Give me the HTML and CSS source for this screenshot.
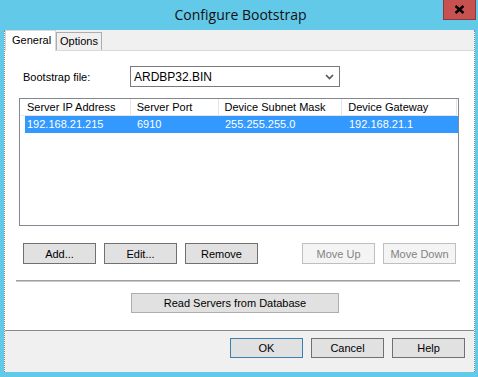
FILE: index.html
```html
<!DOCTYPE html>
<html lang="en">
<head>
    <meta charset="UTF-8">
    <title>Configure Bootstrap</title>
    <link rel="stylesheet" href="styles.css">
</head>
<body>
    <div class="window">
        <div class="titlebar">
            <span class="title">Configure Bootstrap</span>
            <div class="close-btn">
                <svg width="11" height="9" viewBox="0 0 11 9">
                    <path d="M1.5 1 L9.5 8 M9.5 1 L1.5 8" stroke="#000" stroke-width="2.4"/>
                </svg>
            </div>
        </div>

        <div class="client">
            <div class="tab-strip">
                <div class="tab active">General</div>
                <div class="tab">Options</div>
            </div>

            <!-- General tab -->
            <div class="panel">
                <div class="file-row">
                    <label class="file-label">Bootstrap file:</label>
                    <div class="select">
                        <span>ARDBP32.BIN</span>
                        <svg class="chevron" width="9" height="6" viewBox="0 0 9 6">
                            <path d="M1 1 L4.5 4.5 L8 1" fill="none" stroke="#555" stroke-width="1.6"/>
                        </svg>
                    </div>
                </div>

                <div class="listview">
                    <div class="lv-row lv-header">
                        <div class="col c1">Server IP Address</div>
                        <div class="col c2">Server Port</div>
                        <div class="col c3">Device Subnet Mask</div>
                        <div class="col c4">Device Gateway</div>
                    </div>
                    <div class="lv-row selected">
                        <div class="col c1">192.168.21.215</div>
                        <div class="col c2">6910</div>
                        <div class="col c3">255.255.255.0</div>
                        <div class="col c4">192.168.21.1</div>
                    </div>
                </div>

                <div class="btn-row">
                    <button class="btn">Add...</button>
                    <button class="btn">Edit...</button>
                    <button class="btn">Remove</button>
                    <span class="spacer"></span>
                    <button class="btn disabled">Move Up</button>
                    <button class="btn disabled">Move Down</button>
                </div>

                <div class="separator"></div>

                <div class="db-row">
                    <button class="btn wide">Read Servers from Database</button>
                </div>
            </div>

            <div class="footer">
                <button class="btn default">OK</button>
                <button class="btn">Cancel</button>
                <button class="btn">Help</button>
            </div>
        </div>
    </div>
</body>
</html>
```

FILE: styles.css
```css
* {
    margin: 0;
    padding: 0;
    box-sizing: border-box;
}

body {
    background: #63c9e9;
    font-family: "Liberation Sans", Arial, sans-serif;
    font-size: 11px;
    color: #000;
}

.window {
    width: 478px;
    height: 377px;
    background: #63c9e9;
    display: flex;
    flex-direction: column;
    padding: 0 3px 5px 4px;
}

.titlebar {
    height: 30px;
    position: relative;
    display: flex;
    justify-content: center;
    align-items: center;
}

.title {
    font-family: "Open Sans", "Noto Sans", sans-serif;
    font-size: 14px;
    color: #111;
    margin-left: 2px;
    margin-top: -1px;
}

.close-btn {
    position: absolute;
    top: 0;
    right: -1px;
    width: 33px;
    height: 20px;
    background: #c75050;
    border: 1px solid #8a3838;
    border-top: none;
    display: flex;
    justify-content: center;
    align-items: center;
}

.client {
    flex: 1;
    background: #f0f0f0;
    border-left: 1px dotted #8a8a8a;
    border-right: 1px dotted #8a8a8a;
    display: flex;
    flex-direction: column;
}

.tab-strip {
    height: 20px;
    display: flex;
    align-items: flex-end;
}

.tab {
    height: 18px;
    padding: 0 3px;
    border: 1px solid #adadad;
    border-bottom: none;
    background: #f0f0f0;
    line-height: 17px;
    font-size: 11px;
}

.tab.active {
    height: 21px;
    width: 51px;
    background: #fff;
    border-color: #d9d9d9;
    margin-bottom: -1px;
    padding: 1px 6px 0;
    position: relative;
    z-index: 1;
}

.panel {
    height: 281px;
    background: #fff;
    border-top: 1px solid #d9d9d9;
    border-bottom: 1px solid #8a8a8a;
    padding: 15px 14px 0 14px;
}

.file-row {
    display: flex;
    align-items: center;
    height: 21px;
}

.file-label {
    width: 111px;
    padding-left: 4px;
}

.select {
    width: 210px;
    height: 21px;
    border: 1px solid #7a7a7a;
    display: flex;
    align-items: center;
    justify-content: space-between;
    padding: 0 5px 0 3px;
    font-size: 12px;
}

.listview {
    margin-top: 11px;
    width: 440px;
    height: 128px;
    border: 1px solid #828790;
    padding: 0 1px;
}

.lv-row {
    display: flex;
    height: 17px;
    line-height: 17px;
}

.lv-header .col {
    border-right: 1px solid #e5e5e5;
    border-bottom: 1px solid #e5e5e5;
}

.col {
    padding-left: 6px;
    white-space: nowrap;
}

.c1 { width: 110px; }
.c2 { width: 88px; }
.c3 { width: 124px; }
.c4 { width: 115px; }

.selected {
    background: #3399ff;
    color: #fff;
    margin-left: 4px;
    width: 433px;
}

.selected .c1 {
    width: 106px;
    padding-left: 2px;
}

.btn-row {
    display: flex;
    gap: 8px;
    margin-top: 17px;
    padding-left: 4px;
    width: 437px;
}

.spacer {
    flex: 1;
}

.btn {
    height: 21px;
    width: 73px;
    background: #e1e1e1;
    border: 1px solid #adadad;
    font-family: "Liberation Sans", Arial, sans-serif;
    font-size: 11px;
    color: #000;
}

.btn-row .btn {
    border-color: #707070;
}

.btn-row .btn.disabled {
    background: #f4f4f4;
    border-color: #bfbfbf;
    color: #838383;
}

.separator {
    margin: 16px 0 0 -3px;
    width: 444px;
    height: 2px;
    border-top: 1px solid #a0a0a0;
    border-bottom: 1px solid #c8c8c8;
}

.db-row {
    margin-top: 11px;
    padding-left: 112px;
}

.btn.wide {
    width: 208px;
    height: 20px;
}

.footer {
    display: flex;
    justify-content: flex-end;
    gap: 8px;
    padding: 7px 9px 0 0;
}

.footer .btn {
    height: 20px;
    border-color: #707070;
}

.footer .btn.default {
    border-color: #3c7fb1;
}
```
